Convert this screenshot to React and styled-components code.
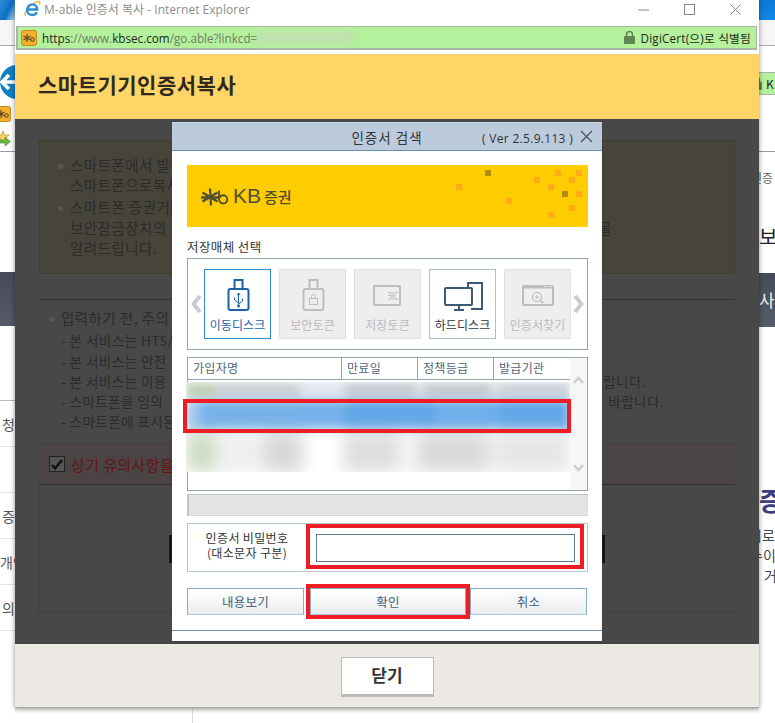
import React from "react";
import styled, { createGlobalStyle } from "styled-components";

const KR = `"Noto Sans CJK KR", "Noto Sans", sans-serif`;
const UI = `"Open Sans", "Noto Sans CJK KR", sans-serif`;

const Global = createGlobalStyle`
  html, body { margin: 0; padding: 0; background: #fff; }
  * { box-sizing: border-box; }
  body { font-family: ${KR}; }
`;

const Desktop = styled.div`
  width: 775px; height: 723px; overflow: hidden; background: #fff;
  display: grid; grid-template-columns: 15px 744px 16px; grid-template-rows: 708px 15px;
`;
const Strip = styled.aside`
  display: flex; flex-direction: column; overflow: hidden; background: #fff;
  height: 723px; grid-row: 1 / 3;
`;
const StripTop = styled.div`
  width: 100%; height: 20px; flex: none;
  background: linear-gradient(${p => (p.$side === "left" ? "115deg, #2f8ed8, #0a6fc2 55%, #bcdcf2" : "180deg, #0a7ad8, #0f86e4")});
`;
const StripGap = styled.div`
  width: 100%; flex: none; height: ${p => p.$h}px; background: ${p => p.$bg || "#fff"};
  border-bottom: ${p => (p.$line ? `1px solid ${p.$line}` : "none")};
`;
const StripIcon = styled.div`
  flex: none; width: 15px; height: ${p => p.$h}px; overflow: hidden; display: flex; justify-content: flex-start;
  align-items: flex-start; padding-top: ${p => p.$top || 0}px;
`;
const ClippedKb = styled.div` margin-left: -5px; flex: none; `;
const StripBand = styled.div`
  flex: none; width: 100%; height: 54px; background: linear-gradient(#454b59, #565b6a);
  color: #eee; font-size: 17px; line-height: 54px; white-space: nowrap;
`;
const StripRow = styled.div`
  flex: none; width: 100%; height: 46px; border-bottom: 1px solid #e4e4e4; display: flex; align-items: center;
  justify-content: ${p => (p.$left ? "flex-start" : "flex-end")}; font-size: 14px; color: #555; white-space: nowrap; overflow: hidden;
`;
const StripGreen = styled.div`
  flex: none; width: 100%; height: 23px; background: #b5f09d; border: 1px solid #a9b5a2; border-left: 0; border-right: 0;
  display: flex; align-items: center; gap: 4px; overflow: hidden; font-size: 12px; color: #222;
`;
const ClippedLock = styled.div` margin-left: -8px; display: flex; flex: none; `;
const StripText = styled.div`
  flex: none; white-space: nowrap; overflow: hidden; width: 100%;
  height: ${p => p.$h}px; line-height: ${p => p.$h}px;
  font-size: ${p => p.$size || 14}px; font-weight: ${p => p.$weight || 400}; color: ${p => p.$color || "#444"};
  text-indent: ${p => p.$indent || 0}px;
`;
const BottomPage = styled.div`
  grid-column: 2; grid-row: 2; background: linear-gradient(#e6e6e6, #fff 6px);
  padding-left: 177px; display: flex;
`;
const BottomRule = styled.div` width: 1px; height: 15px; background: #d8d8d8; `;

const Win = styled.main`
  grid-column: 2; grid-row: 1; position: relative; z-index: 1; height: 708px; background: #fff;
  display: flex; flex-direction: column; box-shadow: 0 0 5px rgba(0,0,0,.45);
  border-bottom: 1px solid #aaa;
`;
const TitleBar = styled.header`
  height: 26px; flex: none; display: flex; align-items: center; padding: 0 0 8px 8px; gap: 3px;
  color: #8e8e8e; font-family: ${UI}; font-size: 12px; letter-spacing: .02px; background: #fff;
`;
const TitleText = styled.span` flex: 1; `;
const WinButtons = styled.div` display: flex; align-items: center; gap: 35px; padding-right: 18px; `;
const UrlBar = styled.div`
  height: 24px; flex: none; margin: 0 2px 4px 1px; background: #b5f09d; border: 1px solid #a9b5a2;
  border-width: 1px 1px 2px 2px; display: flex; align-items: center; padding: 0 5px 0 3px;
  font-family: ${UI}; font-size: 11.7px; color: #6d7d66;
`;
const UrlDark = styled.span` color: #1d2a18; `;
const UrlIcon = styled.span` display: flex; margin-right: 5px; `;
const UrlBlur = styled.span`
  display: inline-block; width: 96px; height: 12px; background: #c0e0b0; filter: blur(3px);
`;
const Spacer = styled.div` flex: 1; `;
const Cert = styled.span`
  display: flex; align-items: center; gap: 6px; font-size: 11.7px; color: #1c2a18; letter-spacing: .2px; white-space: nowrap;
`;
const PageHeader = styled.div`
  height: 65px; flex: none; background: #ffd568; display: flex; align-items: center; padding: 0 0 6px 23px;
  font-size: 21px; font-weight: 700; color: #2f2a1d; letter-spacing: .5px;
`;
const Dim = styled.section`
  position: relative; flex: 1; background: #484848; padding: 21px 24px 0; color: #2b2b2b;
  display: flex; flex-direction: column; min-height: 0; font-size: 14.5px;
`;
const NoticeBox = styled.div`
  height: 134px; flex: none; background: #47443a; border: 1px solid #3f3c31; padding: 14px 0 0 18px;
  display: flex; flex-direction: column;
`;
const Line = styled.div`
  display: flex; justify-content: space-between; white-space: nowrap; height: ${p => p.$h || 20}px;
  line-height: ${p => p.$h || 20}px; padding-left: ${p => p.$indent || 0}px; padding-right: ${p => p.$right || 0}px;
  font-size: ${p => p.$size || 14.5}px; letter-spacing: .45px;
`;
const Bullet = styled.i`
  display: inline-block; width: 5px; height: 5px; border-radius: 50%; background: #575757; margin: 0 7px 2px 0; vertical-align: middle;
`;
const Warnings = styled.div`
  margin-top: 25px; border-top: 1px solid #343434; padding: 6px 0 0 10px; height: 144px; flex: none;
`;
const Agree = styled.div`
  height: 42px; flex: none; background: #4a4444; border-top: 1px solid #414141; border-bottom: 1px solid #303030;
  display: flex; align-items: center; gap: 6px; padding-left: 10px; color: #681414; font-size: 15px; letter-spacing: .4px;
`;
const Check = styled.div`
  width: 16px; height: 16px; border: 1px solid #222; background: #555; display: flex; align-items: center; justify-content: center;
`;
const Lower = styled.div`
  flex: none; height: 128px; border: 1px solid #414141; border-top: 0; display: flex; justify-content: space-between;
  align-items: center; padding: 0 129px;
`;
const Stub = styled.div` width: ${p => p.$w}px; height: 28px; background: #181818; `;
const Footer = styled.footer`
  height: 65px; flex: none; background: #ece9e4; display: flex; justify-content: center; align-items: flex-start;
  padding-top: 13px; border-top: 2px solid #444;
`;
const CloseButton = styled.button`
  width: 93px; height: 40px; background: #fff; border: 1px solid #bbb; border-bottom: 3px solid #bbb;
  font-family: ${KR}; font-size: 17px; font-weight: 700; color: #333; padding: 0 0 3px;
`;

const Dialog = styled.div`
  position: absolute; left: 157px; top: 3px; width: 430px; height: 519px; background: #fff; color: #333;
  display: flex; flex-direction: column; box-shadow: 0 0 1px rgba(0,0,0,.3);
`;
const DialogBar = styled.div`
  height: 29px; flex: none; background: #bccbdc; border-top: 1px solid #cfdae6; border-bottom: 1px solid #6c90b0;
  display: grid; grid-template-columns: 1fr auto 1fr; align-items: center; padding: 0 9px 0 0;
`;
const DialogTitle = styled.span` grid-column: 2; font-size: 13.5px; color: #333; letter-spacing: 1px; padding-left: 9px; `;
const DialogMeta = styled.span`
  grid-column: 3; display: flex; justify-content: flex-end; align-items: center; gap: 7px;
  font-family: ${UI}; font-size: 12px; color: #333; padding-top: 3px; letter-spacing: .3px; white-space: nowrap;
`;
const DialogClose = styled.svg` margin-top: -3px; flex: none; `;
const DialogBody = styled.div` flex: 1; padding: 14px 14px 0 15px; display: flex; flex-direction: column; `;
const Banner = styled.div`
  position: relative; height: 62px; flex: none; background: #ffcc00; display: flex; align-items: center; gap: 4px; padding: 1px 0 0 14px;
`;
const BannerMark = styled.svg` position: absolute; inset: 0; `;
const LogoText = styled.span`
  font-family: "Liberation Sans", ${KR}; font-size: 21px; color: #544d35; line-height: 20px;
`;
const LogoKr = styled.span` font-family: ${KR}; font-size: 15px; font-weight: 500; margin-left: 3px; `;
const FieldLabel = styled.div` height: 31px; flex: none; font-size: 12.5px; color: #333; padding-top: 12px; line-height: 16px; letter-spacing: .4px; `;
const MediaBox = styled.div`
  height: 92px; flex: none; border: 1px solid #93a4b0; display: flex; align-items: center; justify-content: space-between; padding: 0 3px 0 3px;
`;
const Tiles = styled.div` display: flex; gap: 8px; `;
const Tile = styled.div`
  width: 67px; height: 70px; display: flex; flex-direction: column; align-items: center; justify-content: space-between;
  padding: 9px 0 5px;
  border: 1px solid ${p => (p.$state === "on" ? "#2b8ad0" : p.$state === "off" ? "#e0e0e0" : "#aebfca")};
  background: ${p => (p.$state === "off" ? "#eee" : "#fff")};
  color: ${p => (p.$state === "on" ? "#1d62a8" : p.$state === "off" ? "#bbb" : "#333")};
  font-size: 12px; line-height: 16px; letter-spacing: .1px; white-space: nowrap;
`;
const Table = styled.div`
  position: relative; margin-top: 7px; height: 134px; flex: none; border: 1px solid #93a4b0; display: grid;
  grid-template-columns: 382px 17px; background: #fff;
`;
const TableMain = styled.div` display: flex; flex-direction: column; min-width: 0; `;
const HeadRow = styled.div` display: grid; grid-template-columns: 154px 76px 76px 76px; height: 22px; flex: none; border-bottom: 1px solid #93a4b0; `;
const HeadCell = styled.div`
  font-size: 12px; line-height: 20px; padding-left: 5px; color: #50667a; letter-spacing: .3px;
  border-right: ${p => (p.$last ? "none" : "1px solid #93a4b0")};
`;
const BlurArea = styled.div` margin: 2px 0 0 -2px; height: 90px; overflow: hidden; background: #fff; display: flex; flex-direction: column; `;
const BlurRow = styled.div`
  flex: none; height: ${p => p.$h}px; display: flex;
  filter: blur(${p => p.$blur}px);
`;
const BlurCell = styled.div` flex: none; background: ${p => p.$bg}; `;
const RowMark = styled.div`
  position: absolute; left: -5px; top: 41px; width: 388px; height: 34px; border: 4px solid #ee1c25; pointer-events: none;
`;
const ScrollCol = styled.div`
  background: #f7f7f7; display: flex; flex-direction: column; justify-content: space-between; align-items: center; padding: 18px 0 18px;
`;
const HBar = styled.div`
  margin-top: 3px; height: 22px; flex: none; background: #e4e4e4; border: 1px solid #d4d4d4; border-top: 1px solid #c4c4c4; border-left: 2px solid #c4c4c4; border-right: 1px solid #dadada;
`;
const PasswordBox = styled.div`
  margin-top: 7px; height: 49px; flex: none; border: 1px solid #b8c8d0; display: flex; align-items: flex-start;
`;
const PasswordLabel = styled.div`
  width: 118px; flex: none; text-align: center; font-size: 12px; line-height: 15px; padding-top: 6px; color: #333; letter-spacing: .35px;
`;
const PasswordFrame = styled.div` width: 278px; height: 45px; flex: none; border: 4px solid #ee1c25; padding: 6px 5px 3px 6px; display: flex; `;
const PasswordInput = styled.input` width: 100%; height: 28px; border: 1px solid #5f7a8c; background: #fff; padding: 0; `;
const Buttons = styled.div` margin-top: 16px; display: flex; flex: none; `;
const DlgButton = styled.button`
  width: ${p => (p.$primary ? 156 : 117)}px; height: 27px; padding: 0; border: 1px solid #86aecb; border-bottom-color: #a9c8de;
  background: linear-gradient(#fff, #e9edef); font-family: ${KR}; font-size: 12.5px; color: #41627c; letter-spacing: .3px;
  margin: ${p => (p.$primary ? "0 4px 0 6px" : 0)};
  outline: ${p => (p.$primary ? "4px solid #ee1c25" : "none")};
`;
const DialogRule = styled.div` margin: 15px -14px 0 -15px; height: 1px; background: #6c90b0; flex: none; `;

const IE = () => (
  <svg width="18" height="18" viewBox="0 0 18 18" fill="none">
    <path d="M2.500 16C.5 13.500 6 4.500 14 1.800c2.500-.8 3.400.4 2.400 2.800" stroke="#e4b62e" strokeWidth="1.400"/>
    <path d="M5 9.500h9.200C14.300 6.500 12 4.400 9.300 4.400 6.400 4.400 4 6.800 4 9.800c0 3 2.400 5.200 5.300 5.200 2.100 0 3.800-1 4.700-2.800" stroke="#2d8fd8" strokeWidth="2.400"/>
  </svg>
);
const KbIcon = () => (
  <svg width="16" height="16" viewBox="0 0 16 16" fill="none">
    <rect x=".5" y=".5" width="15" height="15" rx="2" fill="#f2b02c" stroke="#c98a16"/>
    <path d="M6 4v8M2.500 6l7 4M9.500 6l-7 4" stroke="#5a4630" strokeWidth="1.200"/>
    <circle cx="11.500" cy="9.500" r="1.800" stroke="#5a4630" strokeWidth="1.100"/>
  </svg>
);
const Lock = () => (
  <svg width="11" height="13" viewBox="0 0 11 13" fill="#5f8650">
    <rect x="0" y="5" width="11" height="8" rx="1"/>
    <path d="M2.500 5.500V3.500a3 3 0 0 1 6 0v2" fill="none" stroke="#5f8650" strokeWidth="1.500"/>
  </svg>
);
const BackArrow = () => (
  <svg width="15" height="34" viewBox="0 0 15 34">
    <circle cx="17" cy="17" r="17" fill="#0f7fc4"/>
    <path d="M2 17h13M9 10l-7 7 7 7" stroke="#fff" strokeWidth="3.500" fill="none"/>
  </svg>
);
const StarAdd = () => (
  <svg width="11" height="16" viewBox="0 0 11 16">
    <path d="M3 1l1.500 4H9L5.500 8 7 12 3 10-1 12l1.500-4L-3 5h4.500z" fill="#f7d66a" stroke="#b58f22" strokeWidth=".7"/>
    <path d="M0 10h5V7l5.500 4.500L5 16v-3H0z" fill="#6dbb3e" stroke="#3f8a22" strokeWidth=".6"/>
  </svg>
);
const Chevron = ({ dir, size = 11, h = 20, color = "#c6cbd0", w = 4 }) => {
  const d = {
    left: `M${size - 2} 2L2.500 ${h / 2}L${size - 2} ${h - 2}`,
    right: `M2 2L${size - 2.500} ${h / 2}L2 ${h - 2}`,
    up: `M2 ${h - 2}L${size / 2} 2L${size - 2} ${h - 2}`,
    down: `M2 2L${size / 2} ${h - 2}L${size - 2} 2`,
  }[dir];
  return <svg width={size} height={h} viewBox={`0 0 ${size} ${h}`}><path d={d} fill="none" stroke={color} strokeWidth={w}/></svg>;
};
const UsbIcon = () => (
  <svg width="24" height="32" viewBox="0 0 24 32" fill="none">
    <path d="M8.500 10V1h8v9" stroke="#1d62a8" strokeWidth="2"/>
    <rect x="2.500" y="10" width="20" height="21" rx="2" stroke="#1d62a8" strokeWidth="2"/>
    <path d="M12.500 14v13M12.500 14l-1.500 2M12.500 14l1.500 2M12.500 24l-4-3v-2.500M12.500 25l4-3v-2.500" stroke="#1d62a8"/>
    <circle cx="12.500" cy="27" r="1.500" fill="#1d62a8"/>
  </svg>
);
const TokenIcon = () => (
  <svg width="24" height="32" viewBox="0 0 24 32" fill="none" stroke="#bdbdbd">
    <path d="M8.500 10V1h8v9" strokeWidth="2"/>
    <rect x="2.500" y="10" width="20" height="21" rx="2" strokeWidth="2"/>
    <rect x="8.500" y="19.500" width="8" height="6" strokeWidth="1"/>
    <path d="M10.500 19.500v-2a2 2 0 0 1 4 0v2"/>
  </svg>
);
const CardIcon = () => (
  <svg width="30" height="32" viewBox="0 0 30 32" fill="none" stroke="#bdbdbd">
    <rect x="1" y="7" width="26" height="19" rx="1" strokeWidth="2"/>
    <path d="M15 13.500h3v3h-3M15 20h3v-3.500M25 13.500h-3v6.500h3M20 13v8" strokeWidth="1"/>
  </svg>
);
const PcIcon = () => (
  <svg width="41" height="32" viewBox="0 0 41 32" fill="none" stroke="#3d5a72" strokeWidth="2">
    <path d="M26 8V4h14v26H29"/>
    <rect x="3" y="9" width="27" height="17" rx="1" fill="#fff"/>
    <path d="M17 26v5M12 31h10"/>
  </svg>
);
const FindIcon = () => (
  <svg width="32" height="32" viewBox="0 0 32 32" fill="none" stroke="#bdbdbd">
    <rect x="1" y="7" width="30" height="19" rx="1" strokeWidth="2"/>
    <path d="M1 8h30" strokeWidth="3"/>
    <path d="M22 7.500h2M25 7.500h2M28 7.500h2" stroke="#eee" strokeWidth="1"/>
    <circle cx="15" cy="18" r="4.500" strokeWidth="1.200"/>
    <path d="M18.500 21.500l2.500 2.500" strokeWidth="2"/>
    <path d="M13 18h4M15 16v4" strokeWidth="1"/>
  </svg>
);
const KbMark = () => (
  <svg width="28" height="18" viewBox="0 0 28 18" fill="none" stroke="#544d35">
    <path d="M9 .5l1 17M1.500 4.500l15 9M1.500 13.500l15-9M0 9.500h18" strokeWidth="2.300"/>
    <path d="M18 2.500v8c0 3 1.800 5 4.200 5a4.100 4.100 0 0 0 0-8.200c-2 0-3.200 1-3.700 2.500" strokeWidth="1.900"/>
  </svg>
);

const SQUARES = [
  [488,173,1],[459,187,0],[558,173,0],[579,173,0],[537,180,0],[572,180,0],
  [551,187,0],[565,194,1],[579,194,0],[509,201,0],[572,208,0],[551,215,0],
];

const BLUR_ROWS = [
  { id: "a", h: 18, blur: 4, cells: [[29,"#c3d2b8"],[85,"#cdd2d8"],[45,"#e0e6ed"],[70,"#c8cdd4"],[10,"#dbe0e6"],[65,"#c6cbd2"],[10,"#dbe0e6"],[70,"#ced3da"]] },
  { id: "b", h: 32, blur: 5, cells: [[14,"#a3c8ec"],[100,"#78b2ea"],[45,"#74b0ea"],[90,"#62a8e8"],[65,"#70aeea"],[70,"#62a8e8"]] },
  { id: "c", h: 40, blur: 8, cells: [[29,"#cfdcc4"],[50,"#efefef"],[38,"#d8d8d8"],[40,"#ffffff"],[55,"#dedede"],[20,"#f5f5f5"],[70,"#dadada"],[10,"#f2f2f2"],[72,"#e6e6e6"]] },
];

export default function App() {
  return (
    <Desktop>
      <Global />
      <Strip $side="left">
        <StripTop $side="left" />
        <StripGap $h={26} $bg="#f6f6f6" $line="#aaa" />
        <StripGap $h={19} />
        <StripIcon $h={38}><BackArrow /></StripIcon>
        <StripIcon $h={27} $top={0}><ClippedKb><KbIcon /></ClippedKb></StripIcon>
        <StripIcon $h={21}><StarAdd /></StripIcon>
        <StripGap $h={1} $line="#999" />
        <StripGap $h={120} />
        <StripBand />
        <StripGap $h={75} $line="#bbb" />
        <StripRow>청</StripRow>
        <StripRow>&nbsp;</StripRow>
        <StripRow>증</StripRow>
        <StripRow $left>개인</StripRow>
        <StripRow>의</StripRow>
      </Strip>
      <Win>
        <TitleBar>
          <IE />
          <TitleText>M-able 인증서 복사 - Internet Explorer</TitleText>
          <WinButtons>
            <svg width="11" height="11" viewBox="0 0 11 11"><path d="M0 6h11" stroke="#888"/></svg>
            <svg width="11" height="11" viewBox="0 0 11 11" fill="none"><rect x=".5" y=".5" width="10" height="10" stroke="#888"/></svg>
            <svg width="11" height="11" viewBox="0 0 11 11"><path d="M.5.5l10 10M10.500.5l-10 10" stroke="#888"/></svg>
          </WinButtons>
        </TitleBar>
        <UrlBar>
          <UrlIcon><KbIcon /></UrlIcon>
          <UrlDark>https</UrlDark>://www.<UrlDark>kbsec.com</UrlDark>/go.able?linkcd=<UrlBlur />
          <Spacer />
          <Cert><Lock />DigiCert(으)로 식별됨</Cert>
        </UrlBar>
        <PageHeader>스마트기기인증서복사</PageHeader>
        <Dim>
          <NoticeBox>
            <Line><span><Bullet />스마트폰에서 발급받은 인증서를 PC로</span></Line>
            <Line $indent={12}><span>스마트폰으로복사합니다</span></Line>
            <Line $h={23}><span><Bullet />스마트폰 증권거래 이용 시</span></Line>
            <Line $indent={12} $right={122}><span>보안잠금장치의</span><span>을</span></Line>
            <Line $indent={12}><span>알려드립니다.</span></Line>
          </NoticeBox>
          <Warnings>
            <Line $h={24}><span><Bullet />입력하기 전, 주의</span></Line>
            <Line $size={13.5} $h={21} $indent={12}><span>- 본 서비스는 HTS/</span></Line>
            <Line $size={13.5} $h={20} $indent={12}><span>- 본 서비스는 안전</span></Line>
            <Line $size={13.5} $h={20} $indent={12} $right={89}><span>- 본 서비스는 이용</span><span>바랍니다.</span></Line>
            <Line $size={13.5} $h={20} $indent={12} $right={71}><span>- 스마트폰을 임의</span><span>바랍니다.</span></Line>
            <Line $size={13.5} $h={20} $indent={12}><span>- 스마트폰에 표시된</span></Line>
          </Warnings>
          <Agree>
            <Check>
              <svg width="12" height="11" viewBox="0 0 12 11"><path d="M1 6l3 3.500L11 1" fill="none" stroke="#111" strokeWidth="2.400"/></svg>
            </Check>
            상기 유의사항을
          </Agree>
          <Lower><Stub $w={3} /><Stub $w={5} /></Lower>
          <Dialog>
            <DialogBar>
              <DialogTitle>인증서 검색</DialogTitle>
              <DialogMeta>
                ( Ver 2.5.9.113 )
                <DialogClose width="13" height="13" viewBox="0 0 13 13"><path d="M1 1l11 11M12 1L1 12" stroke="#3f4e5c" strokeWidth="1.100"/></DialogClose>
              </DialogMeta>
            </DialogBar>
            <DialogBody>
              <Banner>
                <BannerMark width="401" height="62" viewBox="187 165 401 62">
                  {SQUARES.map(([x, y, dark]) => (
                    <rect key={`${x}-${y}`} x={x - 3} y={y - 3} width="6" height="6" fill={dark ? "#b08a10" : "#ffaa18"} />
                  ))}
                </BannerMark>
                <KbMark />
                <LogoText>KB<LogoKr>증권</LogoKr></LogoText>
              </Banner>
              <FieldLabel>저장매체 선택</FieldLabel>
              <MediaBox>
                <Chevron dir="left" />
                <Tiles>
                  <Tile $state="on"><UsbIcon />이동디스크</Tile>
                  <Tile $state="off"><TokenIcon />보안토큰</Tile>
                  <Tile $state="off"><CardIcon />저장토큰</Tile>
                  <Tile><PcIcon />하드디스크</Tile>
                  <Tile $state="off"><FindIcon />인증서찾기</Tile>
                </Tiles>
                <Chevron dir="right" />
              </MediaBox>
              <Table>
                <TableMain>
                  <HeadRow>
                    <HeadCell>가입자명</HeadCell>
                    <HeadCell>만료일</HeadCell>
                    <HeadCell>정책등급</HeadCell>
                    <HeadCell $last>발급기관</HeadCell>
                  </HeadRow>
                  <BlurArea>
                    {BLUR_ROWS.map(r => (
                      <BlurRow key={r.id} $h={r.h} $blur={r.blur}>
                        {r.cells.map(([w, c], i) => <BlurCell key={i} $bg={c} style={{ width: w }} />)}
                      </BlurRow>
                    ))}
                  </BlurArea>
                </TableMain>
                <ScrollCol>
                  <Chevron dir="up" size={13} h={9} w={2.5} color="#cdcdcd" />
                  <Chevron dir="down" size={13} h={9} w={2.5} color="#cdcdcd" />
                </ScrollCol>
                <RowMark />
              </Table>
              <HBar />
              <PasswordBox>
                <PasswordLabel>인증서 비밀번호<br />(대소문자 구분)</PasswordLabel>
                <PasswordFrame><PasswordInput type="password" /></PasswordFrame>
              </PasswordBox>
              <Buttons>
                <DlgButton>내용보기</DlgButton>
                <DlgButton $primary>확인</DlgButton>
                <DlgButton>취소</DlgButton>
              </Buttons>
              <DialogRule />
            </DialogBody>
          </Dialog>
        </Dim>
        <Footer><CloseButton>닫기</CloseButton></Footer>
      </Win>
      <Strip $side="right">
        <StripTop $side="right" />
        <StripGap $h={26} $bg="#f6f6f6" $line="#aaa" />
        <StripGap $h={26} />
        <StripGreen><ClippedLock><Lock /></ClippedLock><span>K</span></StripGreen>
        <StripGap $h={57} $line="#999" />
        <StripText $h={52} $size={12} $color="#666" $indent={-8}>인증</StripText>
        <StripGap $h={18} />
        <StripText $h={30} $size={20} $color="#222">보</StripText>
        <StripGap $h={21} />
        <StripBand>사</StripBand>
        <StripGap $h={151} />
        <StripText $h={44} $size={26} $weight={700} $color="#3d3a80">증</StripText>
        <StripGap $h={3} />
        <StripText $h={20} $indent={-10}>기로</StripText>
        <StripText $h={20} $indent={-9}>수이</StripText>
        <StripText $h={20} $indent={5}>거</StripText>
      </Strip>
      <BottomPage><BottomRule /></BottomPage>
    </Desktop>
  );
}
